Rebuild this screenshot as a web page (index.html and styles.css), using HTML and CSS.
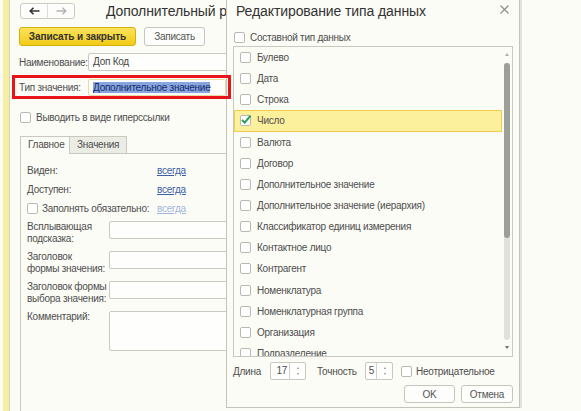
FILE: index.html
```html
<!DOCTYPE html>
<html lang="ru">
<head>
  <meta charset="UTF-8"/>
  <title>Дополнительный реквизит</title>
  <link rel="stylesheet" href="styles.css">
</head>
<body>
  <div class="app">
    <div class="strip"></div>
    <div class="form">
      <div class="head">
        <div class="nav">
          <span><svg width="11" height="8" viewBox="0 0 11 8"><path d="M10.5 4H1.5M4.5 0.8L1.2 4L4.5 7.2" fill="none" stroke="#333" stroke-width="1.6"/></svg></span>
          <span><svg width="11" height="8" viewBox="0 0 11 8"><path d="M0.5 4H9.5M6.5 0.8L9.8 4L6.5 7.2" fill="none" stroke="#b4b4ae" stroke-width="1.4"/></svg></span>
        </div>
        <h1>Дополнительный реквизит (создание)</h1>
      </div>

      <div class="toolbar">
        <button class="btn primary">Записать и закрыть</button>
        <button class="btn save">Записать</button>
      </div>

      <div class="field">
        <label>Наименование:</label>
        <div class="input">Доп Код</div>
      </div>

      <div class="field marked">
        <label>Тип значения:</label>
        <div class="input focus"><span class="sel">Дополнительное значение</span></div>
      </div>

      <div class="check-row">
        <span class="cb"></span>
        <span>Выводить в виде гиперссылки</span>
      </div>

      <div class="tabs">
        <div class="tab active">Главное</div>
        <div class="tab">Значения</div>
      </div>
      <div class="panel">
        <div class="prop"><span class="prop-name">Виден:</span><a class="link">всегда</a></div>
        <div class="prop"><span class="prop-name">Доступен:</span><a class="link">всегда</a></div>
        <div class="prop">
          <span class="prop-name with-cb"><span class="cb"></span>Заполнять обязательно:</span>
          <a class="link off">всегда</a>
        </div>

        <div class="area first">
          <label>Всплывающая подсказка:</label>
          <div class="input"></div>
        </div>
        <div class="area">
          <label>Заголовок<br>формы значения:</label>
          <div class="input"></div>
        </div>
        <div class="area">
          <label>Заголовок формы выбора значения:</label>
          <div class="input"></div>
        </div>
        <div class="area">
          <label>Комментарий:</label>
          <div class="input memo"></div>
        </div>
      </div>
    </div>
  </div>

  <div class="dialog">
    <div class="dlg-head">
      <span class="dlg-title">Редактирование типа данных</span>
      <svg class="close" width="9" height="9" viewBox="0 0 9 9"><path d="M0.5 0.5L8.5 8.5M8.5 0.5L0.5 8.5" stroke="#8c8c88" stroke-width="1.1"/></svg>
    </div>

    <div class="composite"><span class="cb"></span>Составной тип данных</div>

    <div class="list">
      <div class="items">
        <div class="item"><span class="cb"></span>Булево</div>
        <div class="item"><span class="cb"></span>Дата</div>
        <div class="item"><span class="cb"></span>Строка</div>
        <div class="item on"><span class="cb"><svg width="12" height="12" viewBox="0 0 12 12"><path d="M2 5.8L4.7 8.6L10.6 1.6" fill="none" stroke="#1f9a55" stroke-width="1.9"/></svg></span>Число</div>
        <div class="item"><span class="cb"></span>Валюта</div>
        <div class="item"><span class="cb"></span>Договор</div>
        <div class="item"><span class="cb"></span>Дополнительное значение</div>
        <div class="item"><span class="cb"></span>Дополнительное значение (иерархия)</div>
        <div class="item"><span class="cb"></span>Классификатор единиц измерения</div>
        <div class="item"><span class="cb"></span>Контактное лицо</div>
        <div class="item"><span class="cb"></span>Контрагент</div>
        <div class="item"><span class="cb"></span>Номенклатура</div>
        <div class="item"><span class="cb"></span>Номенклатурная группа</div>
        <div class="item"><span class="cb"></span>Организация</div>
        <div class="item"><span class="cb"></span>Подразделение</div>
      </div>
      <div class="scroll">
        <span class="arr up"></span>
        <div class="track"><div class="thumb"></div></div>
        <span class="arr down"></span>
      </div>
    </div>

    <div class="params">
      <span class="p-len">Длина</span>
      <div class="spin w17"><span class="num">17</span><span class="ud"><i class="u"></i><i class="d"></i></span></div>
      <span class="p-prec">Точность</span>
      <div class="spin w5"><span class="num">5</span><span class="ud"><i class="u"></i><i class="d"></i></span></div>
      <span class="cb p-cb"></span>
      <span class="p-neg">Неотрицательное</span>
    </div>

    <div class="actions">
      <button class="btn ok">OK</button>
      <button class="btn cancel">Отмена</button>
    </div>
  </div>
</body>
</html>
```

FILE: styles.css
```css
body { margin:0; background:#fcfcf6; font-family:"Liberation Sans", Arial, sans-serif; font-size:10px; letter-spacing:-0.25px; color:#4e4e4e; width:581px; height:411px; overflow:hidden; position:relative; }

.app { display:flex; height:411px; }
.strip { margin-left:3px; width:6px; background:#f6efa2; border-right:1px solid #d2d2c8; }
.form { padding:3px 0 0 9px; width:470px; }

.head { display:flex; align-items:center; height:16px; width:207px; overflow:hidden; }
.nav { display:flex; flex:none; margin-left:1px; height:14px; border:1px solid #cbcbc3; border-radius:3px; background:#fdfdfb; }
.nav span { width:26px; display:flex; align-items:center; justify-content:center; }
.nav span + span { border-left:1px solid #dedcd4; }
h1 { margin:0 0 0 31px; font-size:14px; font-weight:normal; letter-spacing:-0.1px; color:#333; white-space:nowrap; }

.toolbar { display:flex; gap:8px; margin-top:8px; }
.btn { height:19px; box-sizing:border-box; border:1px solid #c6c6be; border-radius:3px; background:#fdfdfb; font:10px "Liberation Sans", Arial, sans-serif; letter-spacing:-0.25px; color:#555; padding:0; cursor:pointer; }
.primary { width:117px; background:linear-gradient(#fbe25c, #f2cb16); border-color:#d6b10c; font-weight:bold; letter-spacing:-0.1px; color:#333; }
.save { width:61px; }

.field { display:flex; align-items:center; margin-top:7px; }
.field label { width:69px; flex:none; white-space:nowrap; }
.input { flex:1; height:18px; box-sizing:border-box; border:1px solid #cacac2; border-radius:2px; background:#fefefc; padding-left:4px; line-height:16px; color:#444; white-space:nowrap; overflow:hidden; }
.marked { position:relative; z-index:3; margin:4px 0 0 -7px; width:219px; height:24px; box-sizing:border-box; border:3px solid #e8141a; padding:0 2px 0 4px; }
.marked .input { height:17px; line-height:15px; border-color:#e6dca2; }
.sel { background:#88a6de; color:#14296c; }

.check-row { display:flex; align-items:center; gap:5px; height:14px; margin:11px 0 0 1px; }
.cb { width:11px; height:11px; flex:none; box-sizing:border-box; border:1px solid #b9b9b1; border-radius:2px; background:#fff; position:relative; }
.cb svg { position:absolute; left:-1px; top:-2px; }

.tabs { display:flex; margin:12px 0 0 1px; height:17px; }
.tab { height:17px; box-sizing:border-box; padding:0 7px; border:1px solid #c9c9c1; border-bottom:none; line-height:16px; background:#ebece4; }
.tab.active { width:50px; background:#fcfcf6; position:relative; z-index:1; height:18px; }
.tab + .tab { border-left:none; width:57px; }
.panel { margin-left:1px; border-left:1px solid #c9c9c1; border-top:1px solid #c9c9c1; padding:7px 0 0 6px; height:260px; }

.prop { display:flex; align-items:center; height:19px; }
.prop-name { width:130px; display:flex; align-items:center; gap:4px; white-space:nowrap; }
.link { color:#3d5ea6; text-decoration:underline; }
.link.off { color:#a3b6da; }

.area { display:flex; margin-top:6px; }
.area.first { margin-top:3px; }
.area label { width:82px; flex:none; line-height:12px; height:24px; }
.area .input { height:18px; margin-right:6px; }
.area .memo { height:40px; }

.dialog { position:absolute; left:226px; top:-1px; width:294px; box-sizing:border-box; border:1px solid #c3c3bb; background:#fcfcf6; box-shadow:2px 0 0 #e4e4dc; z-index:2; padding:0 6px 4px; }
.dlg-head { height:21px; display:flex; align-items:center; justify-content:space-between; padding:0 4px 0 3px; }
.dlg-title { font-size:14px; letter-spacing:-0.1px; color:#333; }
.close { margin-top:-2px; }

.composite { display:flex; align-items:center; gap:5px; height:14px; margin:9px 0 0 1px; }

.list { display:flex; margin-top:2px; height:311px; box-sizing:border-box; border:1px solid #c9c9c1; }
.items { flex:1; overflow:hidden; }
.item { height:21.15px; box-sizing:border-box; display:flex; align-items:center; gap:6px; padding-left:6px; color:#4e4e4e; white-space:nowrap; }
.item.on { background:#fdf09d; box-shadow:inset 0 0 0 1px #efcd4a; }
.scroll { width:10px; display:flex; flex-direction:column; align-items:center; padding:6px 0 7px; box-sizing:border-box; }
.arr { width:0; height:0; border-left:2px solid transparent; border-right:2px solid transparent; }
.arr.up { border-bottom:3px solid #b0b0aa; }
.arr.down { border-top:3px solid #707070; margin-top:auto; }
.track { width:6px; height:277px; margin-top:7px; border-radius:3px; background:#dfe2da; }
.thumb { height:175px; border-radius:3px; background:#9b9f97; }

.params { display:flex; align-items:center; height:18px; margin-top:5px; }
.p-len { width:37px; }
.p-prec { margin-left:11px; width:48px; }
.p-cb { margin-left:8px; }
.p-neg { margin-left:4px; }
.spin { display:flex; height:18px; box-sizing:border-box; border:1px solid #c9c9c1; border-radius:2px; background:#fefefc; }
.spin.w17 { width:36px; }
.spin.w5 { width:28px; }
.num { flex:1; text-align:right; padding-right:2px; line-height:16px; }
.ud { width:15px; border-left:1px solid #d2d2ca; display:flex; flex-direction:column; align-items:center; justify-content:center; gap:4px; }
.ud i { width:0; height:0; border-left:1.5px solid transparent; border-right:1.5px solid transparent; }
.ud .u { border-bottom:2px solid #8a8a86; }
.ud .d { border-top:2px solid #8a8a86; }

.actions { display:flex; justify-content:flex-end; gap:6px; margin-top:5px; }
.ok { width:51px; height:18px; }
.cancel { width:52px; height:18px; }
```
